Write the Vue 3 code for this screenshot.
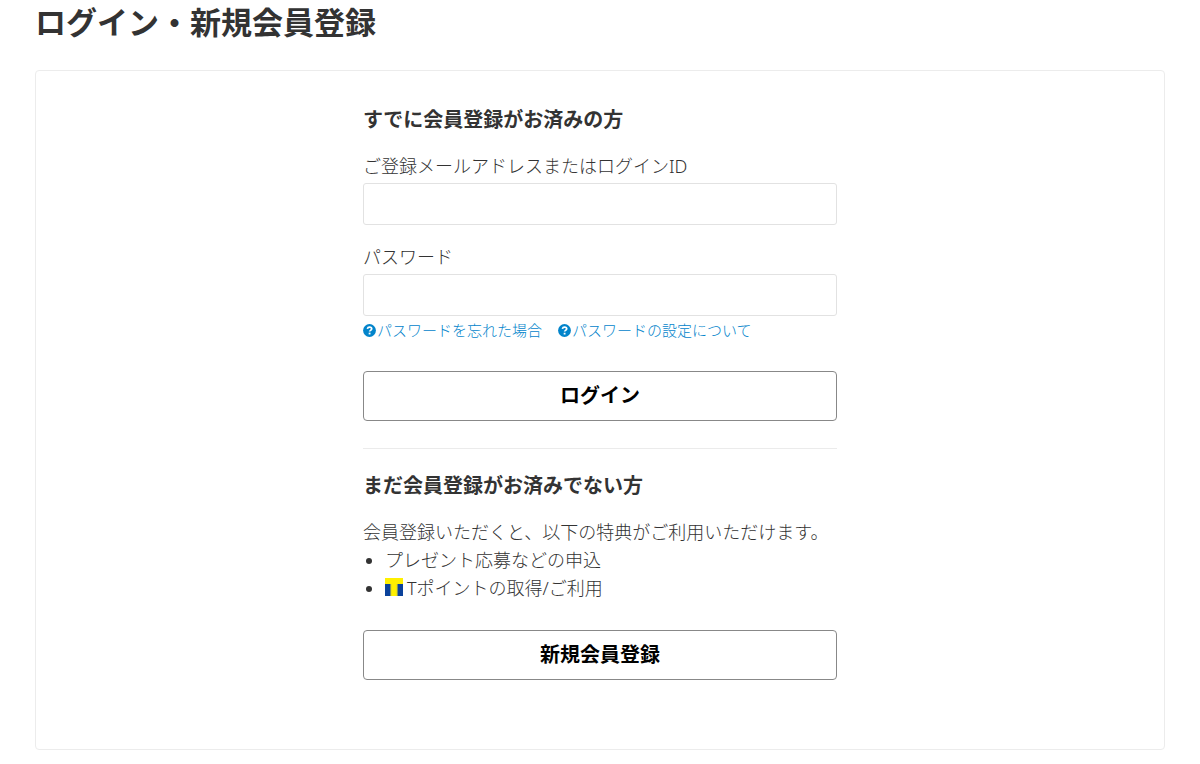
<script setup>
import { ref } from 'vue'

const loginId = ref('')
const password = ref('')
const helpLinks = ['パスワードを忘れた場合', 'パスワードの設定について']
</script>

<template>
  <main class="page">
    <h1 class="title">ログイン・新規会員登録</h1>
    <div class="card">
      <div class="column">
        <form class="login" @submit.prevent>
          <h2 class="heading">すでに会員登録がお済みの方</h2>
          <label class="label" for="login-id">ご登録メールアドレスまたはログインID</label>
          <input id="login-id" v-model="loginId" class="field" type="text" autocomplete="username">
          <label class="label second" for="password">パスワード</label>
          <input id="password" v-model="password" class="field" type="password" autocomplete="current-password">
          <div class="links">
            <a v-for="text in helpLinks" :key="text" class="link" href="#">
              <svg class="help" viewBox="0 0 14 14" aria-hidden="true">
                <circle cx="7" cy="7" r="6.9" fill="#0284cb" />
                <path d="M4.7 5.2C5 3.9 5.9 3.3 7.1 3.3c1.3 0 2.3.8 2.3 1.9 0 1.6-2.3 1.6-2.3 3" fill="none" stroke="#fff" stroke-width="1.8" />
                <path d="M6.1 9.3h2v1.9h-2z" fill="#fff" />
              </svg>
              <span>{{ text }}</span>
            </a>
          </div>
          <button class="button" type="submit">ログイン</button>
        </form>
        <section class="register">
          <h2 class="heading">まだ会員登録がお済みでない方</h2>
          <p class="text">会員登録いただくと、以下の特典がご利用いただけます。</p>
          <ul class="benefits">
            <li>プレゼント応募などの申込</li>
            <li>
              <svg class="tpoint" viewBox="0 0 18 18" aria-hidden="true">
                <path d="M0 0h18v18H0z" fill="#fff000" />
                <path d="M0 6h5.6v12H0zM12.4 6H18v12h-5.6z" fill="#0b429b" />
                <path d="M5.6 6h.6v12h-.6zM11.8 6h.6v12h-.6z" fill="#a9ae58" />
              </svg>
              <span>Tポイントの取得/ご利用</span>
            </li>
          </ul>
          <button class="button" type="button">新規会員登録</button>
        </section>
      </div>
    </div>
  </main>
</template>

<style>
body {
  margin: 0;
  background: #fff;
}
</style>

<style scoped>
.page {
  padding: 0 35px 14px;
  color: #333;
  font-family: "Noto Sans", "Noto Sans CJK JP", sans-serif;
  font-size: 18px;
  font-weight: 300;
  line-height: 28px;
}

.title {
  margin: 0 0 26px;
  font-size: 31px;
  font-weight: 700;
  line-height: 44px;
}

.card {
  padding: 34px 16px 69px;
  border: 1px solid #ececec;
  border-radius: 4px;
}

.column {
  max-width: 474px;
  margin: 0 auto;
}

.heading {
  margin: 0 0 17px;
  font-size: 20px;
  font-weight: 700;
  line-height: 30px;
}

.label {
  display: block;
  margin-bottom: 3px;
}

.second {
  margin-top: 18px;
}

.field {
  display: block;
  box-sizing: border-box;
  width: 100%;
  height: 42px;
  padding: 0 12px;
  border: 1px solid #e2e2e2;
  border-radius: 3px;
  background: #fff;
  color: inherit;
  font: inherit;
}

.links {
  display: flex;
  flex-wrap: wrap;
  gap: 0 16px;
  margin: 3px 0 30px;
  font-size: 15px;
  line-height: 22px;
}

.link {
  display: flex;
  align-items: center;
  gap: 1px;
  color: #0284cb;
  text-decoration: none;
  white-space: nowrap;
}

.help {
  width: 13px;
  height: 13px;
}

.button {
  display: block;
  box-sizing: border-box;
  width: 100%;
  height: 50px;
  padding: 0 12px;
  border: 1px solid #888;
  border-radius: 4px;
  background: #fff;
  color: #000;
  font-family: inherit;
  font-size: 20px;
  font-weight: 700;
  line-height: 30px;
}

.register {
  margin-top: 27px;
  padding-top: 22px;
  border-top: 1px solid #ebebeb;
}

.text {
  margin: 0;
}

.benefits {
  margin: 0 0 28px;
  padding-left: 22px;
}

.tpoint {
  width: 18px;
  height: 18px;
  margin-right: 4px;
  vertical-align: -1px;
}
</style>
